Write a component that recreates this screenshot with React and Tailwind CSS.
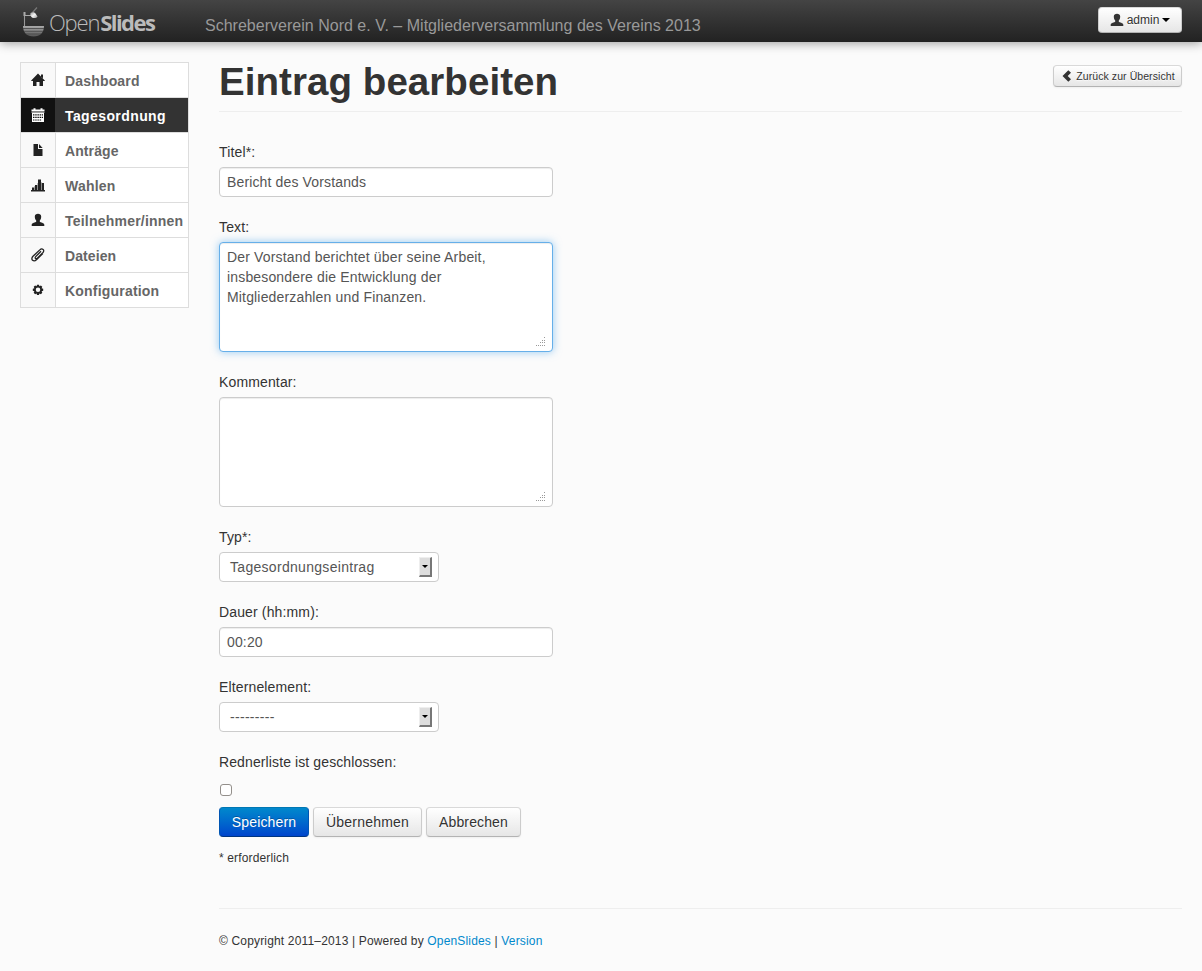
import React from "react";

const Icon = ({ children, className = "" }) => (
  <svg viewBox="0 0 14 14" className={"h-[14px] w-[14px] shrink-0 " + className} fill="currentColor">
    {children}
  </svg>
);

const HomeIcon = () => (
  <Icon className="-ml-[1px]">
    <path d="M7 .6 13.800 7.400V8H12v5H8.500V9h-3v4H2V8H.2v-.6z" />
    <path d="M10 1.500h2V5.500L10 3.500z" />
  </Icon>
);
const CalendarIcon = () => (
  <Icon className="-ml-[1px]">
    <path d="M.5 1.500h2V.3h2v1.200h5V.3h2v1.200h2v2H.5z" />
    <path d="M.5 4h13v1H.5z" opacity=".6" />
    <path
      d="M1 5h12v9H1zM2 6.200v1.200h1.500V6.200zm2.200 0v1.200h1.500V6.200zm2.200 0v1.200h1.500V6.200zm2.200 0v1.200h1.500V6.200zm2.200 0v1.200h1.200V6.200zM2 8.800V10h1.500V8.800zm2.200 0V10h1.500V8.800zm2.200 0V10h1.500V8.800zm2.200 0V10h1.500V8.800zm2.200 0V10h1.200V8.800zM2 11.400v1.200h1.500v-1.200zm2.200 0v1.200h1.500v-1.200zm2.200 0v1.200h1.500v-1.200zm2.200 0v1.200h1.500v-1.200z"
      fillRule="evenodd"
    />
  </Icon>
);
const FileIcon = () => (
  <Icon className="-ml-[1px]">
    <path d="M2.500 1H7v5h4.500v7h-9z" />
    <path d="M8 1l3.600 4H8z" />
  </Icon>
);
const StatsIcon = () => (
  <Icon>
    <path d="M0 12h14v1.500H0z" />
    <path d="M1 9.500h2.300V12H1zM4 7h2.300v5H4zM7 1.500h3V12H7zM10.700 5H13v7h-2.300z" />
    <path d="M3.300 8h.7v4h-.7zM6.300 5h.7v7h-.7zM10 4h.7v8H10z" opacity=".4" />
  </Icon>
);
const UserIcon = () => (
  <Icon>
    <path d="M3.800 3.600C3.800 1.600 5.200.8 7 .8s3.200.8 3.200 2.800c0 1.800-.6 3.200-1.400 4v1.200c.6.8 4.500 1.200 4.500 2.900V13H.7v-1.300c0-1.700 3.900-2.100 4.500-2.900V7.600c-.8-.8-1.400-2.200-1.400-4z" />
  </Icon>
);
const ClipIcon = () => (
  <Icon>
    <path
      d="M10 3.200 4.700 8.600c-1.400 1.500.3 2.900 1.600 1.600l5.500-5.500c2.600-2.800-.8-5-3-2.800L2 8.300c-3 3.300.6 6.300 3.700 3.300l6.100-6"
      fill="none"
      stroke="currentColor"
      strokeWidth="1.300"
    />
  </Icon>
);
const CogIcon = () => (
  <Icon>
    <path
      fillRule="evenodd"
      d="M6 1.700h2l.4 1.500 1.500-.8 1.400 1.400-.7 1.500 1.600.5v2l-1.600.4.7 1.500-1.400 1.500-1.500-.8L8 12H6l-.4-1.600-1.500.8-1.400-1.500.7-1.500-1.600-.4v-2l1.600-.5-.7-1.500 1.400-1.400 1.500.8zM7 4.600a2.250 2.250 0 1 0 0 4.500 2.250 2.250 0 0 0 0-4.500z"
    />
  </Icon>
);
const BackIcon = () => (
  <Icon>
    <path d="M8.300 1.200 11 3.800 7.700 7 11 10.200l-2.700 2.600L2.500 7z" />
  </Icon>
);

const Logo = () => (
  <svg viewBox="0 0 24 32" className="h-[32px] w-[24px] shrink-0">
    <defs>
      <linearGradient id="bowl" x1="0" y1="0" x2="0" y2="1">
        <stop offset="0" stopColor="#aaa" />
        <stop offset="1" stopColor="#555" />
      </linearGradient>
      <linearGradient id="lamp" x1="0" y1="0" x2="1" y2="1">
        <stop offset="0" stopColor="#999" />
        <stop offset=".5" stopColor="#f5f5f5" />
        <stop offset="1" stopColor="#999" />
      </linearGradient>
    </defs>
    <path d="M2.500 7v13" stroke="#999" strokeWidth="1.100" />
    <path d="M2 9.500h7" stroke="#aaa" />
    <path d="M1.500 6h2v4h-2z" fill="#aaa" />
    <path d="M10.500 6.500 15 1.500" stroke="#777" strokeWidth="1.200" />
    <path d="M8.500 7c1.500-1.300 4-1 5 .5l2 3c-1 1.800-4 2-5.500 1C8.500 10.500 8 8.500 8.500 7z" fill="url(#lamp)" />
    <path d="M1 20h21c0 6.500-4 10.500-10.500 10.500S1 26.500 1 20z" fill="url(#bowl)" />
    <path d="M1 22.500h21M2 25.300h19M4 28h15" stroke="#444" strokeWidth=".8" />
  </svg>
);

const navItems = [
  ["Dashboard", HomeIcon, "tracking-[0.17px]"],
  ["Tagesordnung", CalendarIcon, "tracking-[0.4px]"],
  ["Anträge", FileIcon, "tracking-[0.1px]"],
  ["Wahlen", StatsIcon, "tracking-[0.2px]"],
  ["Teilnehmer/innen", UserIcon, "tracking-[0.22px]"],
  ["Dateien", ClipIcon, "tracking-[0.1px]"],
  ["Konfiguration", CogIcon, "tracking-[0.2px]"],
];

const Field = ({ label, children }) => (
  <div className="mb-5">
    <div className="mb-[5px] h-5">{label}</div>
    {children}
  </div>
);

const box = "rounded-[4px] border border-[#ccc] bg-white text-[#555] shadow-[inset_0_1px_1px_rgba(0,0,0,0.075)]";

const Grip = () => (
  <svg viewBox="0 0 10 10" className="h-[10px] w-[10px]" fill="#999" shapeRendering="crispEdges">
    <path d="M8 0h1v1H8zM6 3h1v1H6zM8 3h1v1H8zM4 5h1v1H4zM6 5h1v1H6zM8 5h1v1H8zM2 8h1v1H2zM0 8h1v1H0zM4 8h1v1H4zM6 8h1v1H6zM8 8h1v1H8z" />
  </svg>
);

const TextArea = ({ active, children }) => (
  <div
    className={
      active
        ? "flex h-[110px] w-[334px] flex-col justify-between rounded-[4px] border border-[#66afe9] bg-white px-[7px] pt-1 pb-1 text-[#555] shadow-[inset_0_1px_1px_rgba(0,0,0,0.075),0_0_8px_rgba(82,168,236,0.6)]"
        : "flex h-[110px] w-[334px] flex-col justify-between px-[7px] pt-1 pb-1 " + box
    }
  >
    <div className="tracking-[0.16px] whitespace-pre-line">{children}</div>
    <div className="-mr-[1px] flex justify-end"><Grip /></div>
  </div>
);

const Select = ({ children }) => (
  <div className="flex h-[30px] w-[220px] items-center justify-between rounded-[4px] border border-[#ccc] bg-white pr-[6px] pl-[10px] text-[#555]">
    <span className="tracking-[0.3px]">{children}</span>
    <span className="flex h-[20px] w-[13px] items-center justify-center border-t border-r-2 border-b-2 border-l border-t-[#eee] border-r-[#777] border-b-[#777] border-l-[#eee] bg-[#ddd]">
      <svg viewBox="0 0 6 3" className="h-[3px] w-[6px]"><path d="M0 0h6L3 3z" /></svg>
    </span>
  </div>
);

const greyButton =
  "flex items-center justify-center rounded-[4px] border border-t-[#d9d9d9] border-x-[#ccc] border-b-[#b3b3b3] bg-linear-to-b from-white to-[#e6e6e6] text-[#333] shadow-[inset_0_1px_0_rgba(255,255,255,0.2),0_1px_2px_rgba(0,0,0,0.05)] [text-shadow:0_1px_1px_rgba(255,255,255,0.75)]";

export default function App() {
  return (
    <div className="h-[971px] w-[1202px] overflow-hidden bg-[#fbfbfb] font-['Liberation_Sans',Arial,sans-serif] text-[14px] leading-5 whitespace-nowrap text-[#333]">
      <header className="flex h-[42px] items-start bg-linear-to-b from-[#444] to-[#222] shadow-[0_1px_10px_rgba(0,0,0,0.4)]">
        <div className="flex w-[205px] items-start pt-[6px] pl-[22px]">
          <Logo />
          <div className="mt-[1px] ml-[3px] flex font-['Open_Sans',sans-serif] text-[22px] leading-[30px] text-[#bbb]">
            <span className="font-light tracking-[-1.200px]">Open</span>
            <span className="ml-[1px] font-bold tracking-[-1.550px]">Slides</span>
          </div>
        </div>
        <div className="pt-4 text-[16px] tracking-[0.015px] text-[#999]">
          Schreberverein Nord e. V. – Mitgliederversammlung des Vereins 2013
        </div>
        <button className={"mt-[7px] mr-5 ml-auto h-[26px] w-[84px] gap-[3px] text-[12px] " + greyButton}>
          <UserIcon />
          <span>admin</span>
          <svg viewBox="0 0 8 4" className="h-[4px] w-[8px]"><path d="M0 0h8L4 4z" /></svg>
        </button>
      </header>

      <div className="flex px-5 pt-5">
        <nav className="mr-[30px] h-[246px] w-[169px] shrink-0 border border-[#ddd] bg-white">
          {navItems.map(([name, Glyph, spacing], i) => (
            <div key={name} className={"flex font-bold " + (i < 6 ? "h-[35px] border-b border-[#ddd] " : "h-[34px] ") + (i === 1 ? "bg-[#333] text-white" : "bg-white text-[#666]")}>
              <div className={"flex w-[35px] shrink-0 justify-center border-r pt-[10px] " + (i === 1 ? "border-[#333] bg-[#111] text-white" : "border-[#ddd] bg-[#f9f9f9] text-[#222]")}>
                <Glyph />
              </div>
              <div className={"pt-2 pl-[9px] " + spacing}>{name}</div>
            </div>
          ))}
        </nav>

        <main className="min-w-0 flex-1 tracking-[0.14px]">
          <div className="mb-[30px] flex h-[50px] justify-between border-b border-[#eee]">
            <h1 className="text-[38.500px] leading-10 font-bold tracking-[0.06px]">Eintrag bearbeiten</h1>
            <button className={"mt-[3px] h-[22px] w-[129px] gap-[2px] text-[10.500px] tracking-[0.07px] " + greyButton}>
              <BackIcon />
              <span>Zurück zur Übersicht</span>
            </button>
          </div>

          <Field label="Titel*:">
            <div className={"h-[30px] w-[334px] px-[7px] py-1 " + box}>Bericht des Vorstands</div>
          </Field>
          <Field label="Text:">
            <TextArea active>
              {"Der Vorstand berichtet über seine Arbeit,\ninsbesondere die Entwicklung der\nMitgliederzahlen und Finanzen."}
            </TextArea>
          </Field>
          <Field label="Kommentar:"><TextArea /></Field>
          <Field label="Typ*:"><Select>Tagesordnungseintrag</Select></Field>
          <Field label="Dauer (hh:mm):">
            <div className={"h-[30px] w-[334px] px-[7px] py-1 " + box}>00:20</div>
          </Field>
          <Field label="Elternelement:"><Select>---------</Select></Field>
          <div className="h-5 tracking-[0.11px]">Rednerliste ist geschlossen:</div>
          <div className="mt-3 ml-[1px] h-3 w-3 rounded-[3px] border border-[#938f8b] bg-white" />

          <div className="mt-[11px] flex gap-1">
            <button className="h-[30px] w-[90px] rounded-[4px] border border-t-[#0077b3] border-x-[#0055b3] border-b-[#003580] bg-linear-to-b from-[#0088cc] to-[#0044cc] text-white [text-shadow:0_-1px_0_rgba(0,0,0,0.25)]">Speichern</button>
            <button className={"h-[30px] w-[109px] tracking-[0.2px] " + greyButton}>Übernehmen</button>
            <button className={"h-[30px] w-[95px] " + greyButton}>Abbrechen</button>
          </div>
          <div className="mt-[11px] text-[12px]">* erforderlich</div>

          <footer className="mt-10 border-t border-[#eee] pt-[22px] text-[12px] tracking-[0.165px]">
            © Copyright 2011–2013 | Powered by <span className="text-[#0088cc]">OpenSlides</span> | <span className="text-[#0088cc]">Version</span>
          </footer>
        </main>
      </div>
    </div>
  );
}
